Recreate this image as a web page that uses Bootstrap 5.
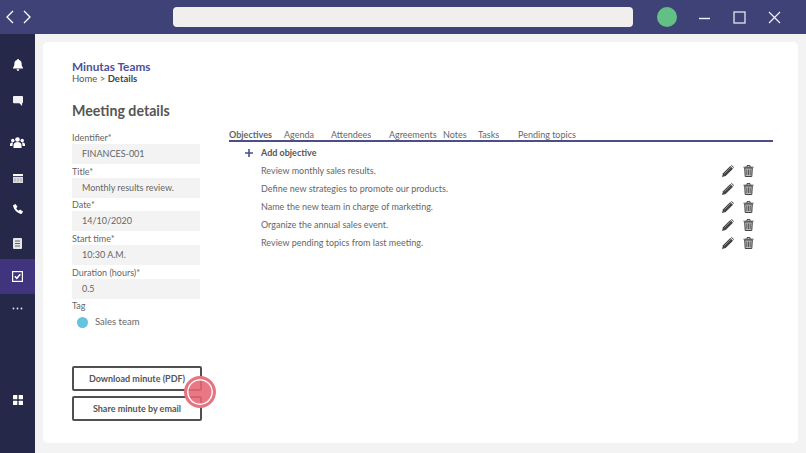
<!doctype html>
<html lang="en"><head><meta charset="utf-8"><title>Meeting details</title>
<link href="https://cdn.jsdelivr.net/npm/bootstrap@5.3.0/dist/css/bootstrap.min.css" rel="stylesheet">
<style>
html,body{height:100%;overflow:hidden}
body{font-family:"Lato","Liberation Sans",sans-serif;background:#f3f3f3;color:#666;width:806px;height:453px;font-size:9px}
.topbar{height:34px;background:#3f4277;padding-left:6px}
.topbar svg{display:block}
.fwd{margin-left:9px}
.addr{width:460px;height:20px;background:#f1eeee;border-radius:4px;margin-left:142px}
.dot{width:20px;height:20px;border-radius:50%;background:#62c086;margin-left:24px}
.winbtns{margin-left:21px;gap:22px}
.main{height:419px}
.side{width:35px;background:#26284a;flex:none;padding-top:13px}
.sideitem{width:35px;display:flex;align-items:center;justify-content:center;flex:none}
.h36{height:36px}.h46{height:46px}.h26{height:26px}.h32{height:32px}.h35{height:35px}.h28{height:28px}
.sideitem.on{background:#40347f}
.gridbtn{height:20px;margin-top:68px}
.panel{width:755px;height:401px;margin:8px 0 0 8px;background:#fff;border-radius:5px;padding:18px 25px 0 29px;position:relative}
.brand{font-size:11.8px;font-weight:700;color:#4b5198;line-height:13px}
.crumb{font-size:9.5px;line-height:11px;color:#555;margin-top:0}
.crumb b{color:#444}
h1.ttl{font-size:14.2px;font-weight:700;color:#555;margin:17px 0 0;line-height:20px}
.formcol{width:128px;flex:none}
.fields{margin-top:10px}
.lab{font-size:9px;line-height:13px;color:#666;display:block;margin:0}
.inp{height:20px;background:#f3f3f3;line-height:19px;padding-left:10px;font-size:9px;color:#666}
.fg{height:33.7px}
.tagrow{height:20px;font-size:9.5px}
.tagdot{width:11px;height:11px;border-radius:50%;background:#62c4de;margin:0 7px 0 5px}
.btns{margin-top:34px;gap:5px}
.mybtn{display:block;width:130px;height:25px;border:2px solid #505050;border-radius:2px;background:#fff;font-size:9px;font-weight:700;color:#555;line-height:21px;text-align:center;padding:0}
.tabcol{width:544px;margin-left:29px;padding-top:68px}
.tabs{border-bottom:2px solid #4b4f86;height:14px;font-size:9px;line-height:13px;color:#666}
.tabs span{display:block}
.t1{width:55px}.t2{width:47px}.t3{width:58px}.t4{width:54px}.t5{width:35px}.t6{width:40px}
.addrow{height:20px;padding-top:2px;gap:8px;padding-left:16px;color:#555}
.objrow{height:18px;align-items:center;padding-left:32px}
.act{gap:9px;margin-right:19px}
.pulse{position:absolute;left:141px;top:334px;width:32px;height:32px;border-radius:50%;background:rgba(230,100,115,.88);border:3px solid #e77480;box-shadow:inset 0 0 0 1.5px #fff}
</style></head><body>
<svg width="0" height="0" class="position-absolute" aria-hidden="true">
<symbol id="pen" viewBox="0 0 12 12"><path d="M0 12l1-3.700L8.300 1 11 3.700 3.700 11z" fill="#444"/><path d="M2.500 8.500 8.800 2.200" stroke="#999" stroke-width=".8"/><path d="M9 .5l.7-.5L12 2.300l-.5.700z" fill="#555"/></symbol>
<symbol id="bin" viewBox="0 0 11 12"><path d="M.5 2.200h10M4 2V.6h3V2" fill="none" stroke="#444" stroke-width="1"/><path d="M1.700 3h7.600l-.5 8.500H2.200z" fill="#bbb" stroke="#444" stroke-width="1"/><path d="M3.800 4.500v5.500M5.500 4.500v5.500M7.200 4.500v5.500" stroke="#444" stroke-width=".8"/></symbol>
</svg>
<div class="topbar d-flex align-items-center">
<svg width="8" height="14" viewBox="0 0 8 14"><path d="M7 1 1 7l6 6" fill="none" stroke="#fff" stroke-width="1.3"/></svg>
<svg class="fwd" width="8" height="14" viewBox="0 0 8 14"><path d="M1 1l6 6-6 6" fill="none" stroke="#fff" stroke-width="1.3"/></svg>
<div class="addr"></div><div class="dot"></div>
<div class="d-flex align-items-center winbtns">
<svg width="13" height="13" viewBox="0 0 13 13"><path d="M1 7.500h11" stroke="#f1f1f7" stroke-width="1.400"/></svg>
<svg width="13" height="13" viewBox="0 0 13 13"><rect x="1" y="1" width="11" height="11" fill="none" stroke="#e4e4f0" stroke-width="1.300"/></svg>
<svg width="13" height="13" viewBox="0 0 13 13"><path d="M1 1l11 11M12 1 1 12" stroke="#f1f1f7" stroke-width="1.200"/></svg>
</div></div>
<div class="main d-flex">
<nav class="side d-flex flex-column">
<div class="sideitem h36"><svg width="12" height="12" viewBox="0 0 12 12" fill="#fff"><path d="M6 0c.6 0 1 .4 1 .9 1.700.4 2.600 1.800 2.600 3.500 0 2.300.7 3.500 1.400 4.300v.8H1v-.8c.7-.8 1.400-2 1.400-4.300C2.400 2.700 3.300 1.300 5 .9 5 .4 5.400 0 6 0zM4.700 10.300h2.600C7.300 11.200 6.700 12 6 12s-1.300-.8-1.300-1.700z"/></svg></div>
<div class="sideitem h36"><svg width="10" height="10" viewBox="0 0 11 11" fill="#f2f2f2"><path d="M1 0h9a1 1 0 0 1 1 1v6a1 1 0 0 1-1 1v3L7 8H1a1 1 0 0 1-1-1V1a1 1 0 0 1 1-1z"/></svg></div>
<div class="sideitem h46"><svg width="15" height="11" viewBox="0 0 15 11" fill="#fff"><circle cx="7.500" cy="2.500" r="2.300"/><circle cx="2.800" cy="3.500" r="1.700"/><circle cx="12.200" cy="3.500" r="1.700"/><path d="M3.500 11V8c0-2 2-3 4-3s4 1 4 3v3zM0 9V7.500C0 6 1.200 5.500 2.800 5.500l.2.100C2.700 6.500 2.500 7.500 2.500 9zM15 9V7.500c0-1.500-1.200-2-2.800-2l-.2.100c.3.900.5 1.900.5 3.400z"/></svg></div>
<div class="sideitem h26"><svg width="10" height="10" viewBox="0 0 10 10"><path d="M0 1h10v2H0z" fill="#fff"/><path d="M0 3.800h10V10H0z" fill="#d9d9d9"/><path d="M2 5.500v3M5 5.500v3M8 5.500v3" stroke="#8a8a9a" stroke-width=".7"/></svg></div>
<div class="sideitem h36"><svg width="10" height="10" viewBox="0 0 10 10" fill="#fff"><path d="M.5 1 2.500 0l2 2.800-1.300 1.400c.5 1.100 1.300 1.900 2.500 2.500L7 5.400l3 2L9 9.600c-.3.300-.8.400-1.200.3C3.800 8.800 1 6 .1 2 0 1.600.2 1.200.5 1z"/></svg></div>
<div class="sideitem h32"><svg width="9" height="11" viewBox="0 0 9 11"><rect width="9" height="11" rx="1" fill="#e6e6e6"/><path d="M2 3h5M2 5.500h5M2 8h5" stroke="#555" stroke-width=".9"/></svg></div>
<div class="sideitem h35 on"><svg width="11" height="11" viewBox="0 0 11 11"><rect x=".6" y=".6" width="9.800" height="9.800" fill="none" stroke="#fff" stroke-width="1.200"/><path d="M2.800 5.300l2 2 3.500-4" fill="none" stroke="#fff" stroke-width="1.500"/></svg></div>
<div class="sideitem h28"><svg width="11" height="3" viewBox="0 0 11 3" fill="#e6e6ee"><circle cx="1.500" cy="1.500" r=".9"/><circle cx="5.500" cy="1.500" r=".9"/><circle cx="9.500" cy="1.500" r=".9"/></svg></div>
<div class="sideitem gridbtn"><svg width="10" height="10" viewBox="0 0 10 10" fill="#fff"><rect width="4.300" height="4.300" rx=".5"/><rect x="5.700" width="4.300" height="4.300" rx=".5"/><rect y="5.700" width="4.300" height="4.300" rx=".5"/><rect x="5.700" y="5.700" width="4.300" height="4.300" rx=".5"/></svg></div>
</nav>
<main class="panel">
<div class="d-flex">
<div class="formcol">
<div class="brand">Minutas Teams</div>
<div class="crumb">Home &gt; <b>Details</b></div>
<h1 class="ttl">Meeting details</h1>
<div class="fields">
<div class="fg"><span class="lab">Identifier*</span><div class="inp">FINANCES-001</div></div>
<div class="fg"><span class="lab">Title*</span><div class="inp">Monthly results review.</div></div>
<div class="fg"><span class="lab">Date*</span><div class="inp">14/10/2020</div></div>
<div class="fg"><span class="lab">Start time*</span><div class="inp">10:30 A.M.</div></div>
<div class="fg"><span class="lab">Duration (hours)*</span><div class="inp">0.5</div></div>
<span class="lab">Tag</span>
<div class="d-flex align-items-center tagrow"><span class="tagdot"></span><span>Sales team</span></div>
</div>
<div class="d-flex flex-column btns">
<button class="mybtn" type="button">Download minute (PDF)</button>
<button class="mybtn" type="button">Share minute by email</button>
</div>
</div>
<div class="tabcol">
<div class="tabs d-flex">
<span class="t1"><b>Objectives</b></span><span class="t2">Agenda</span><span class="t3">Attendees</span><span class="t4">Agreements</span><span class="t5">Notes</span><span class="t6">Tasks</span><span class="t7">Pending topics</span>
</div>
<div class="d-flex align-items-center addrow"><svg width="8" height="8" viewBox="0 0 8 8"><path d="M4 0v8M0 4h8" stroke="#4b4f96" stroke-width="1.600"/></svg><b>Add objective</b></div>
<div class="d-flex objrow"><span class="flex-grow-1">Review monthly sales results.</span><span class="d-flex act"><svg width="12" height="12"><use href="#pen"/></svg><svg width="11" height="12"><use href="#bin"/></svg></span></div>
<div class="d-flex objrow"><span class="flex-grow-1">Define new strategies to promote our products.</span><span class="d-flex act"><svg width="12" height="12"><use href="#pen"/></svg><svg width="11" height="12"><use href="#bin"/></svg></span></div>
<div class="d-flex objrow"><span class="flex-grow-1">Name the new team in charge of marketing.</span><span class="d-flex act"><svg width="12" height="12"><use href="#pen"/></svg><svg width="11" height="12"><use href="#bin"/></svg></span></div>
<div class="d-flex objrow"><span class="flex-grow-1">Organize the annual sales event.</span><span class="d-flex act"><svg width="12" height="12"><use href="#pen"/></svg><svg width="11" height="12"><use href="#bin"/></svg></span></div>
<div class="d-flex objrow"><span class="flex-grow-1">Review pending topics from last meeting.</span><span class="d-flex act"><svg width="12" height="12"><use href="#pen"/></svg><svg width="11" height="12"><use href="#bin"/></svg></span></div>
</div>
</div>
<div class="pulse"></div>
</main>
</div>
<script src="https://cdn.jsdelivr.net/npm/bootstrap@5.3.0/dist/js/bootstrap.bundle.min.js"></script>
</body></html>
